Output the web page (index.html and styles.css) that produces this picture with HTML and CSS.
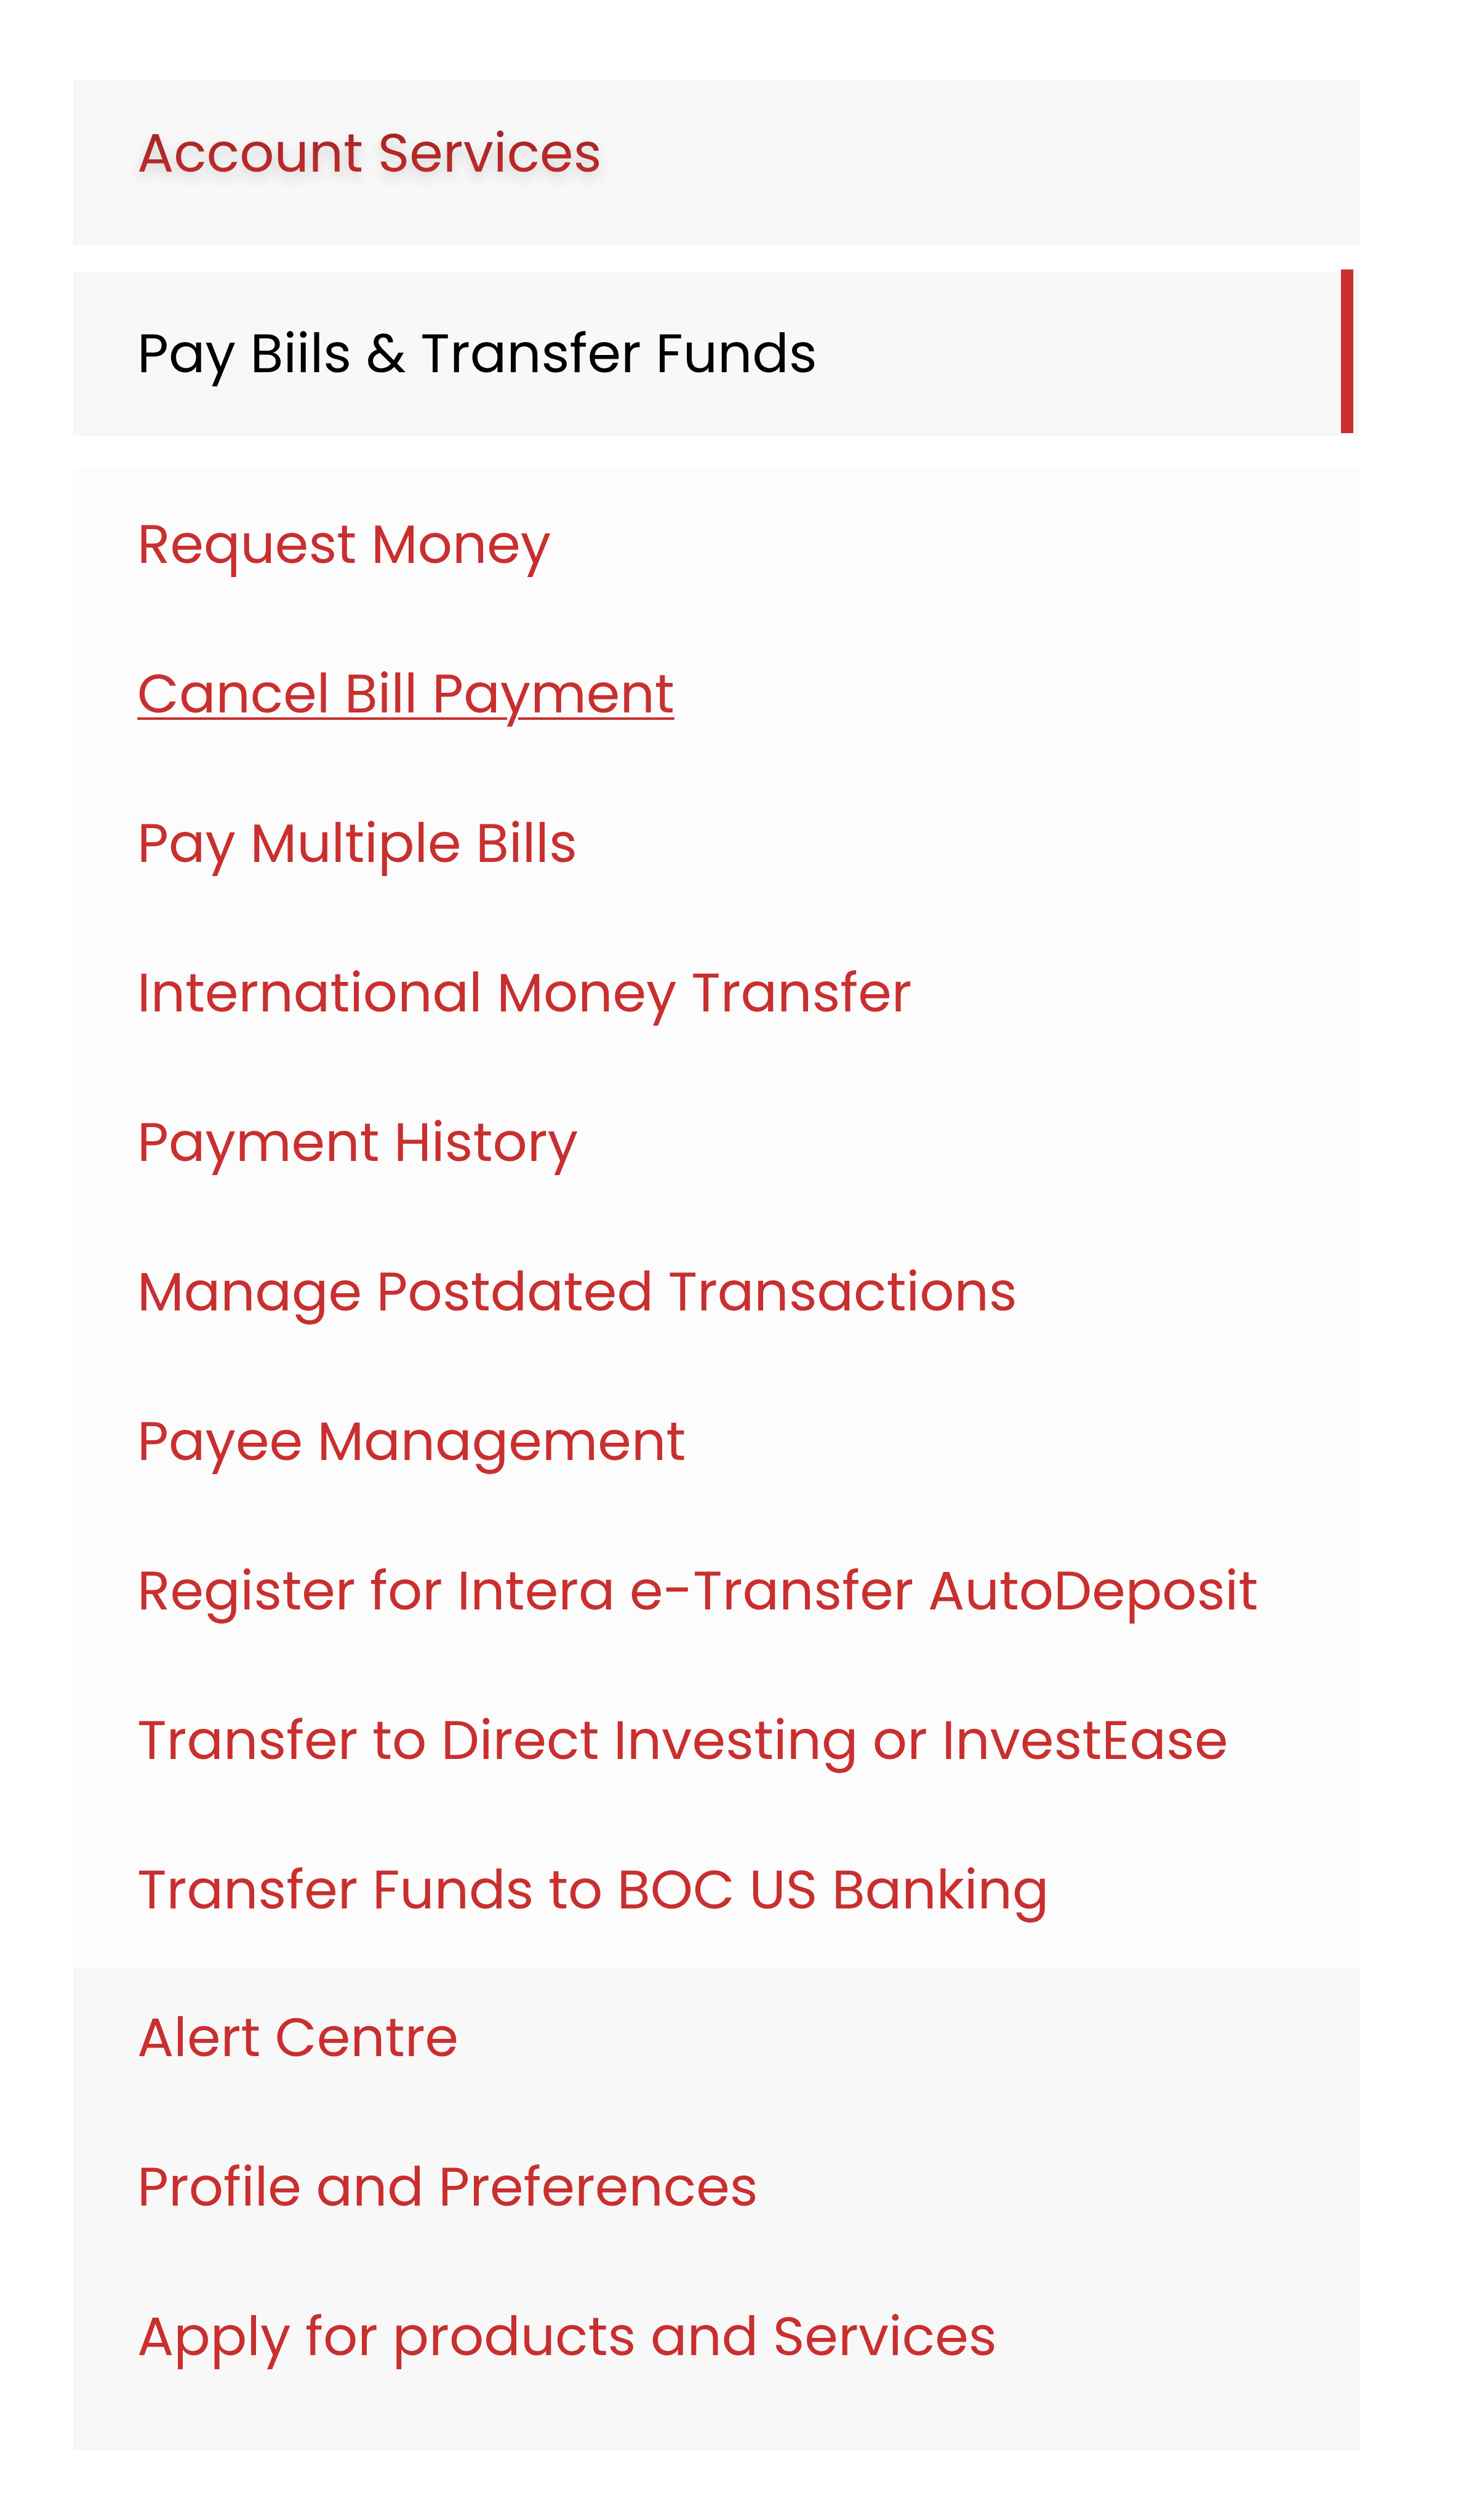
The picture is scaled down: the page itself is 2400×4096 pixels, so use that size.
FILE: index.html
```html
<!DOCTYPE html>
<html lang="en">
<head>
<meta charset="utf-8">
<meta name="viewport" content="width=device-width, initial-scale=1">
<title>Banking menu</title>
<link rel="stylesheet" href="styles.css">
</head>
<body>
<nav class="menu" aria-label="Banking">
  <div class="panel account"><a class="link" href="#account"><span class="raised">Account Services</span></a></div>
  <div class="panel current"><a class="link" href="#pay" aria-current="page">Pay Biils &amp; Transfer Funds</a></div>
  <div class="submenu">
    <a class="link" href="#request">Request Money</a>
    <a class="link underlined" href="#cancel">Cancel Bill Payment</a>
    <a class="link" href="#multiple">Pay Multiple Bills</a>
    <a class="link" href="#international">International Money Transfer</a>
    <a class="link" href="#history">Payment History</a>
    <a class="link" href="#postdated">Manage Postdated Transactions</a>
    <a class="link" href="#payee">Payee Management</a>
    <a class="link" href="#autodeposit">Register for Intera e-Transfer AutoDeposit</a>
    <a class="link" href="#investing">Transfer to Direct Investing or InvestEase</a>
    <a class="link" href="#us">Transfer Funds to BOC US Banking</a>
  </div>
  <div class="panel alerts"><a class="link" href="#alert">Alert Centre</a></div>
  <div class="panel more">
    <a class="link" href="#profile">Profile and Preferences</a>
    <a class="link" href="#apply">Apply for products and Services</a>
  </div>
</nav>
</body>
</html>
```
FILE: styles.css
```css
body {
  margin: 0;
  background: #fff;
  font-family: Poppins, Inter, sans-serif;
  font-size: 88px;
  line-height: 218px;
}

.menu {
  display: flex;
  flex-direction: column;
  padding: 131px 191px 112px 119px;
}

.panel,
.submenu {
  display: flex;
  flex-direction: column;
  gap: 25px;
}

.panel {
  background: #f8f8f8;
  border: 4px solid #f6f6f6;
  padding: 0 100px;
}

.submenu {
  background: #fcfcfc;
  margin-top: 55px;
  padding: 13px 104px 18px;
}

.link {
  color: #c92f2f;
  text-decoration: none;
  white-space: nowrap;
}

.underlined {
  text-decoration: underline;
  text-decoration-thickness: 4px;
  text-underline-offset: 8px;
}

.account {
  padding-top: 5px;
  padding-bottom: 36px;
}

.raised {
  background: linear-gradient(#a92525 25%, #bd2b2b 75%);
  background-clip: text;
  color: transparent;
  filter: drop-shadow(0 10px 10px rgba(0, 0, 0, 0.16));
}

.current {
  position: relative;
  margin-top: 44px;
  padding-top: 20px;
  padding-bottom: 20px;
}

.current .link {
  color: #000;
}

/* red marker on the selected section, slightly raised over its panel */
.current::after {
  content: "";
  position: absolute;
  top: -8px;
  bottom: 0;
  right: 6px;
  width: 20px;
  background: #c92f2f;
}

.alerts {
  padding-bottom: 21px;
}

.more {
  border-top: 0;
  padding-bottom: 72px;
}
```
